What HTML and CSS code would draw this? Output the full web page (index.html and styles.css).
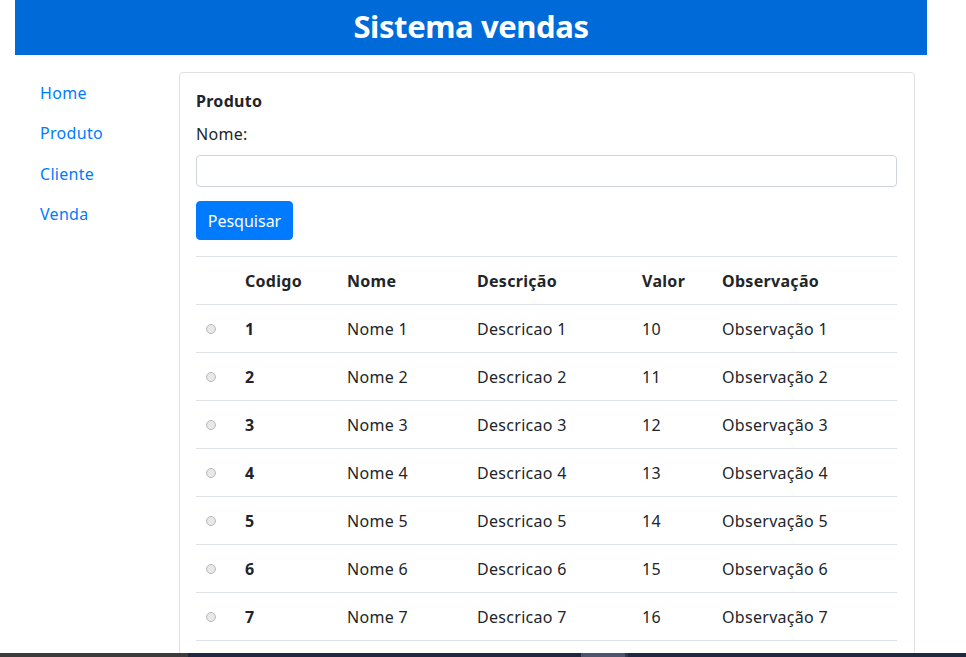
FILE: index.html
```html
<!DOCTYPE html>
<html lang="pt">
<head>
<meta charset="utf-8">
<title>Sistema vendas</title>
<link rel="stylesheet" href="styles.css">
</head>
<body>
<header class="topbar"><h1 class="title">Sistema vendas</h1></header>
<div class="layout">
  <nav class="side">
    <a class="nav-link" href="#">Home</a>
    <a class="nav-link" href="#">Produto</a>
    <a class="nav-link" href="#">Cliente</a>
    <a class="nav-link" href="#">Venda</a>
  </nav>
  <main class="main">
    <section class="card">
      <div class="card-title">Produto</div>
      <label class="label" for="nome">Nome:</label>
      <input class="input" id="nome" type="text">
      <button class="btn" type="button">Pesquisar</button>
      <table class="table">
        <thead>
          <tr><th class="c-sel"></th><th class="c-cod">Codigo</th><th class="c-nome">Nome</th><th class="c-desc">Descrição</th><th class="c-val">Valor</th><th class="c-obs">Observação</th></tr>
        </thead>
        <tbody>
          <tr><td class="c-sel"><span class="radio"></span></td><th>1</th><td>Nome 1</td><td>Descricao 1</td><td>10</td><td>Observação 1</td></tr>
          <tr><td class="c-sel"><span class="radio"></span></td><th>2</th><td>Nome 2</td><td>Descricao 2</td><td>11</td><td>Observação 2</td></tr>
          <tr><td class="c-sel"><span class="radio"></span></td><th>3</th><td>Nome 3</td><td>Descricao 3</td><td>12</td><td>Observação 3</td></tr>
          <tr><td class="c-sel"><span class="radio"></span></td><th>4</th><td>Nome 4</td><td>Descricao 4</td><td>13</td><td>Observação 4</td></tr>
          <tr><td class="c-sel"><span class="radio"></span></td><th>5</th><td>Nome 5</td><td>Descricao 5</td><td>14</td><td>Observação 5</td></tr>
          <tr><td class="c-sel"><span class="radio"></span></td><th>6</th><td>Nome 6</td><td>Descricao 6</td><td>15</td><td>Observação 6</td></tr>
          <tr class="last"><td class="c-sel"><span class="radio"></span></td><th>7</th><td>Nome 7</td><td>Descricao 7</td><td>16</td><td>Observação 7</td></tr>
        </tbody>
      </table>
    </section>
  </main>
</div>
<div class="taskbar">
  <div class="tb-left"></div>
  <div class="tb-mid"></div>
  <div class="tb-app"></div>
  <div class="tb-edge"></div>
  <div class="tb-rest"></div>
</div>
</body>
</html>
```
FILE: styles.css
```css
* { box-sizing: border-box; }
html, body { margin: 0; padding: 0; }
body {
  font-family: "Noto Sans", "Open Sans", sans-serif;
  font-size: 16px;
  line-height: 24px;
  letter-spacing: 0.3px;
  color: #212529;
  background: #fff;
  overflow: hidden;
  height: 657px;
}
.topbar {
  margin-left: 15px;
  width: 912px;
  height: 55px;
  background: #006ad9;
  display: flex;
  align-items: center;
  justify-content: center;
}
.title {
  margin: 0;
  color: #fff;
  font-family: "Noto Sans", sans-serif;
  font-weight: 700;
  font-size: 31px;
  line-height: 40px;
  letter-spacing: -0.4px;
  padding-bottom: 3px;
}
.layout {
  display: flex;
  margin-left: 15px;
  width: 912px;
  padding-top: 17px;
}
.side {
  width: 164px;
  padding-left: 9px;
  padding-top: 1px;
  display: flex;
  flex-direction: column;
}
.nav-link {
  display: block;
  padding: 8px 16px 8.3px;
  color: #007bff;
  text-decoration: none;
  line-height: 24px;
  font-size: 16px;
}
.main { flex: 1; margin-right: 12px; }
.card {
  border: 1px solid #dfdfdf;
  border-radius: 4px;
  padding: 16px 17px 0 16px;
  height: 584px;
  overflow: hidden;
  display: flex;
  flex-direction: column;
  align-items: flex-start;
}
.card-title { font-weight: 700; line-height: 24px; }
.label { display: block; margin-top: 9px; margin-bottom: 8px; }
.input {
  width: 100%;
  height: 32px;
  border: 1px solid #ced4da;
  border-radius: 4px;
  font: inherit;
  padding: 4px 12px;
  margin-top: 1px;
}
.btn {
  margin-top: 14px;
  background: #007bff;
  color: #fff;
  border: 1px solid #007bff;
  border-radius: 4px;
  font: inherit;
  font-size: 16px;
  line-height: 24px;
  padding: 6px 10px;
  height: 39px;
  width: 97px;
}
.table {
  margin-top: 16px;
  width: 100%;
  border-collapse: collapse;
  table-layout: fixed;
}
.table th, .table td {
  border-top: 1px solid #dee2e6;
  padding: 12px 12px 11px;
  text-align: left;
  vertical-align: middle;
  white-space: nowrap;
  line-height: 24px;
}
.table tr.last td, .table tr.last th { border-bottom: 1px solid #dee2e6; }
.table thead th { font-weight: 700; }
.table tbody th { font-weight: 700; }
.table td { font-weight: 400; }
.c-sel { width: 37px; }
.c-cod { width: 102px; }
.c-nome { width: 130px; }
.c-desc { width: 165px; }
.c-val { width: 80px; }
.c-obs { width: auto; }
.table td.c-sel { padding-left: 10px; padding-right: 0; }
.radio {
  display: block;
  width: 10px;
  height: 10px;
  border-radius: 50%;
  background: #e9e9e9;
  border: 1px solid #b8b8b8;
}
.taskbar {
  position: fixed;
  left: 0;
  right: 0;
  bottom: 0;
  height: 4px;
  display: flex;
}
.tb-left { width: 188px; background: #3b3b3b; }
.tb-mid { width: 393px; background: #1e2840; }
.tb-app { width: 44px; background: #4b566c; }
.tb-edge { width: 3px; background: #2e384e; }
.tb-rest { flex: 1; background: #1e2840; }
```
